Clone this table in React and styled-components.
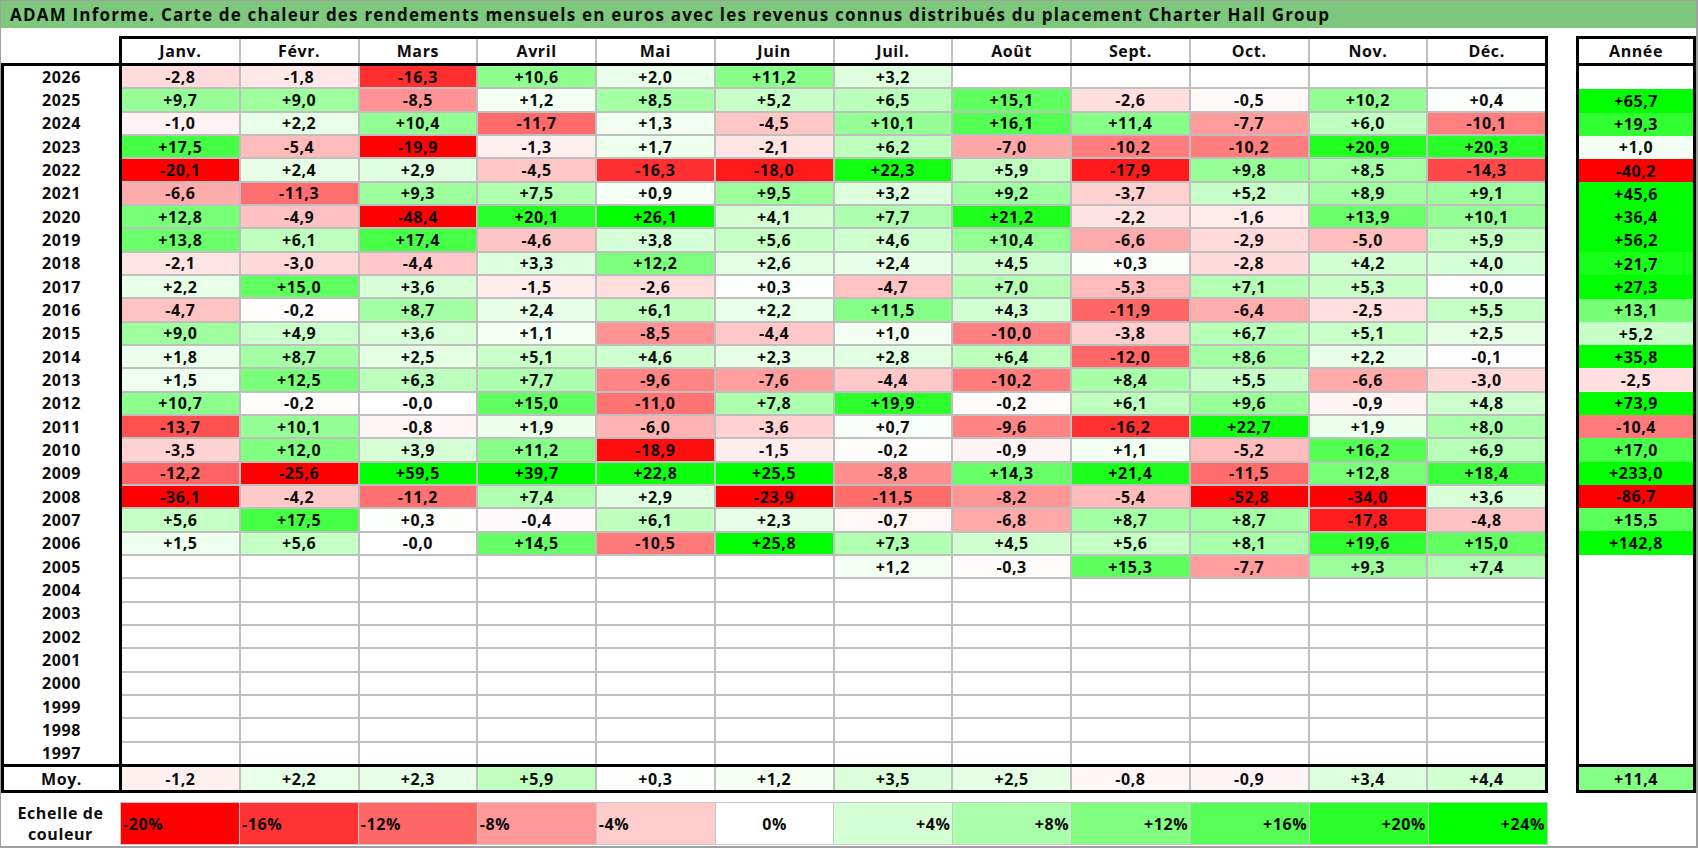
import React from 'react';
import styled, { createGlobalStyle } from 'styled-components';

const Global = createGlobalStyle`
  html, body { margin: 0; padding: 0; background: #fff; }
  body { font-family: "Open Sans", "Liberation Sans", sans-serif; color: #000; }
  * { box-sizing: border-box; }
`;

const MONTHS = ['Janv.', 'Févr.', 'Mars', 'Avril', 'Mai', 'Juin', 'Juil.', 'Août', 'Sept.', 'Oct.', 'Nov.', 'Déc.'];

const RAW = [
  ['2026', '-2,8 -1,8 -16,3 +10,6 +2,0 +11,2 +3,2 . . . . .', '.'],
  ['2025', '+9,7 +9,0 -8,5 +1,2 +8,5 +5,2 +6,5 +15,1 -2,6 -0,5 +10,2 +0,4', '+65,7'],
  ['2024', '-1,0 +2,2 +10,4 -11,7 +1,3 -4,5 +10,1 +16,1 +11,4 -7,7 +6,0 -10,1', '+19,3'],
  ['2023', '+17,5 -5,4 -19,9 -1,3 +1,7 -2,1 +6,2 -7,0 -10,2 -10,2 +20,9 +20,3', '+1,0'],
  ['2022', '-20,1 +2,4 +2,9 -4,5 -16,3 -18,0 +22,3 +5,9 -17,9 +9,8 +8,5 -14,3', '-40,2'],
  ['2021', '-6,6 -11,3 +9,3 +7,5 +0,9 +9,5 +3,2 +9,2 -3,7 +5,2 +8,9 +9,1', '+45,6'],
  ['2020', '+12,8 -4,9 -48,4 +20,1 +26,1 +4,1 +7,7 +21,2 -2,2 -1,6 +13,9 +10,1', '+36,4'],
  ['2019', '+13,8 +6,1 +17,4 -4,6 +3,8 +5,6 +4,6 +10,4 -6,6 -2,9 -5,0 +5,9', '+56,2'],
  ['2018', '-2,1 -3,0 -4,4 +3,3 +12,2 +2,6 +2,4 +4,5 +0,3 -2,8 +4,2 +4,0', '+21,7'],
  ['2017', '+2,2 +15,0 +3,6 -1,5 -2,6 +0,3 -4,7 +7,0 -5,3 +7,1 +5,3 +0,0', '+27,3'],
  ['2016', '-4,7 -0,2 +8,7 +2,4 +6,1 +2,2 +11,5 +4,3 -11,9 -6,4 -2,5 +5,5', '+13,1'],
  ['2015', '+9,0 +4,9 +3,6 +1,1 -8,5 -4,4 +1,0 -10,0 -3,8 +6,7 +5,1 +2,5', '+5,2'],
  ['2014', '+1,8 +8,7 +2,5 +5,1 +4,6 +2,3 +2,8 +6,4 -12,0 +8,6 +2,2 -0,1', '+35,8'],
  ['2013', '+1,5 +12,5 +6,3 +7,7 -9,6 -7,6 -4,4 -10,2 +8,4 +5,5 -6,6 -3,0', '-2,5'],
  ['2012', '+10,7 -0,2 -0,0 +15,0 -11,0 +7,8 +19,9 -0,2 +6,1 +9,6 -0,9 +4,8', '+73,9'],
  ['2011', '-13,7 +10,1 -0,8 +1,9 -6,0 -3,6 +0,7 -9,6 -16,2 +22,7 +1,9 +8,0', '-10,4'],
  ['2010', '-3,5 +12,0 +3,9 +11,2 -18,9 -1,5 -0,2 -0,9 +1,1 -5,2 +16,2 +6,9', '+17,0'],
  ['2009', '-12,2 -25,6 +59,5 +39,7 +22,8 +25,5 -8,8 +14,3 +21,4 -11,5 +12,8 +18,4', '+233,0'],
  ['2008', '-36,1 -4,2 -11,2 +7,4 +2,9 -23,9 -11,5 -8,2 -5,4 -52,8 -34,0 +3,6', '-86,7'],
  ['2007', '+5,6 +17,5 +0,3 -0,4 +6,1 +2,3 -0,7 -6,8 +8,7 +8,7 -17,8 -4,8', '+15,5'],
  ['2006', '+1,5 +5,6 -0,0 +14,5 -10,5 +25,8 +7,3 +4,5 +5,6 +8,1 +19,6 +15,0', '+142,8'],
  ['2005', '. . . . . . +1,2 -0,3 +15,3 -7,7 +9,3 +7,4', '.'],
  ['2004', '', '.'], ['2003', '', '.'], ['2002', '', '.'], ['2001', '', '.'],
  ['2000', '', '.'], ['1999', '', '.'], ['1998', '', '.'], ['1997', '', '.'],
];

const parseList = (s) => {
  const parts = s ? s.split(' ') : [];
  return Array.from({ length: 12 }, (_, i) => (parts[i] && parts[i] !== '.' ? parts[i] : null));
};

const ROWS = RAW.map(([year, vals, total]) => ({
  year,
  vals: parseList(vals),
  total: total === '.' ? null : total,
}));

const AVG = parseList('-1,2 +2,2 +2,3 +5,9 +0,3 +1,2 +3,5 +2,5 -0,8 -0,9 +3,4 +4,4');
const AVG_TOTAL = '+11,4';

const SCALE = [-20, -16, -12, -8, -4, 0, 4, 8, 12, 16, 20, 24];

const num = (s) => (s == null ? null : parseFloat(s.replace(',', '.')));

const heat = (s) => {
  const v = typeof s === 'number' ? s : num(s);
  if (v == null || Number.isNaN(v)) return '#ffffff';
  if (v < 0) {
    const t = Math.min(1, -v / 20);
    const g = Math.round(255 * (1 - t));
    return `rgb(255, ${g}, ${g})`;
  }
  const t = Math.min(1, v / 24);
  const r = Math.round(255 * (1 - t));
  return `rgb(${r}, 255, ${r})`;
};

const THICK = '3px solid #000';
const GRID_GREY = '#bfbfbf';

const Frame = styled.div`
  width: 1698px;
  height: 848px;
  border-top: 1px solid #a0a0a0;
  border-left: 1px solid #a0a0a0;
  border-right: 2px solid #a0a0a0;
  border-bottom: 2px solid #a0a0a0;
  display: flex;
  flex-direction: column;
  overflow: hidden;
  background: #fff;
`;

const TitleBar = styled.div`
  height: 27px;
  flex: none;
  background: #7ec87e;
  padding-left: 9px;
  font-weight: 700;
  font-size: 17px;
  letter-spacing: 1.2px;
  line-height: 27px;
  white-space: nowrap;
  color: #0d0d0d;
`;

const Main = styled.div`
  display: flex;
  gap: 28px;
  margin-top: 8px;
  flex: none;
`;

const LeftBlock = styled.div`
  width: 1547px;
  display: flex;
  flex-direction: column;
`;

const HeadRow = styled.div`
  display: flex;
  height: 30px;
  border-bottom: ${THICK};
`;

const HeadSpacer = styled.div`
  width: 118px;
  flex: none;
`;

const MonthHead = styled.div`
  flex: 1;
  display: grid;
  grid-template-columns: repeat(12, minmax(0, 1fr));
  gap: 2px;
  background: ${GRID_GREY};
  border: ${THICK};
  border-bottom: none;
`;

const Text = styled.div`
  font-weight: 700;
  font-size: 16px;
  line-height: 20px;
  letter-spacing: 0.6px;
  white-space: nowrap;
  color: #0d0d0d;
  min-height: 0;
`;

const HeadCell = styled(Text)`
  background: #fff;
  display: flex;
  align-items: center;
  justify-content: center;
`;

const BodyRow = styled.div`
  display: flex;
  height: 698px;
  border-left: ${THICK};
  border-right: ${THICK};
`;

const YearCol = styled.div`
  width: 118px;
  flex: none;
  border-right: ${THICK};
  display: grid;
  grid-template-rows: repeat(30, minmax(0, 1fr));
  row-gap: 2px;
`;

const YearCell = styled(Text)`
  display: flex;
  align-items: center;
  justify-content: center;
`;

const MonthGrid = styled.div`
  flex: 1;
  display: grid;
  grid-template-columns: repeat(12, minmax(0, 1fr));
  grid-template-rows: repeat(${(p) => p.$rows}, minmax(0, 1fr));
  gap: 2px;
  background: ${GRID_GREY};
`;

const Cell = styled(Text)`
  background: ${(p) => heat(p.$v)};
  display: flex;
  align-items: center;
  justify-content: center;
  overflow: hidden;
`;

const MoyRow = styled.div`
  display: flex;
  height: 29px;
  border: ${THICK};
`;

const MoyLabel = styled(YearCell)`
  width: 118px;
  flex: none;
  border-right: ${THICK};
`;

const AnneeBlock = styled.div`
  width: 120px;
  display: flex;
  flex-direction: column;
`;

const AnneeHead = styled(Text)`
  height: 30px;
  border: ${THICK};
  display: flex;
  align-items: center;
  justify-content: center;
`;

const AnneeBody = styled.div`
  height: 698px;
  border-left: ${THICK};
  border-right: ${THICK};
  display: grid;
  grid-template-rows: repeat(30, minmax(0, 1fr));
`;

const AnneeMoy = styled.div`
  height: 29px;
  border: ${THICK};
  display: grid;
`;

const ScaleRow = styled.div`
  display: flex;
  height: 43px;
  margin-top: 9px;
  flex: none;
`;

const ScaleLabel = styled(Text)`
  width: 119px;
  flex: none;
  display: flex;
  flex-direction: column;
  align-items: center;
  justify-content: center;
  line-height: 21px;
  padding-top: 1px;
`;

const ScaleGrid = styled.div`
  width: 1428px;
  display: grid;
  grid-template-columns: repeat(12, minmax(0, 1fr));
  gap: 1px;
  background: #c8c8c8;
  border: 1px solid #c8c8c8;
`;

const ScaleCell = styled(Text)`
  background: ${(p) => heat(p.$v)};
  display: flex;
  align-items: center;
  justify-content: ${(p) => (p.$v < 0 ? 'flex-start' : p.$v > 0 ? 'flex-end' : 'center')};
  padding: 0 2px;
`;

const scaleLabel = (v) => (v > 0 ? `+${v}%` : `${v}%`);

export default function App() {
  return (
    <>
      <Global />
      <Frame>
        <TitleBar>
          ADAM Informe. Carte de chaleur des rendements mensuels en euros avec les revenus connus distribués du placement Charter Hall Group
        </TitleBar>
        <Main>
          <LeftBlock>
            <HeadRow>
              <HeadSpacer />
              <MonthHead>
                {MONTHS.map((m) => (
                  <HeadCell key={m}>{m}</HeadCell>
                ))}
              </MonthHead>
            </HeadRow>
            <BodyRow>
              <YearCol>
                {ROWS.map((r) => (
                  <YearCell key={r.year}>{r.year}</YearCell>
                ))}
              </YearCol>
              <MonthGrid $rows={30}>
                {ROWS.map((r) =>
                  r.vals.map((v, i) => (
                    <Cell key={`${r.year}-${i}`} $v={v}>
                      {v}
                    </Cell>
                  ))
                )}
              </MonthGrid>
            </BodyRow>
            <MoyRow>
              <MoyLabel>Moy.</MoyLabel>
              <MonthGrid $rows={1}>
                {AVG.map((v, i) => (
                  <Cell key={`avg-${i}`} $v={v}>
                    {v}
                  </Cell>
                ))}
              </MonthGrid>
            </MoyRow>
          </LeftBlock>
          <AnneeBlock>
            <AnneeHead>Année</AnneeHead>
            <AnneeBody>
              {ROWS.map((r) => (
                <Cell key={`t-${r.year}`} $v={r.total}>
                  {r.total}
                </Cell>
              ))}
            </AnneeBody>
            <AnneeMoy>
              <Cell $v={AVG_TOTAL}>{AVG_TOTAL}</Cell>
            </AnneeMoy>
          </AnneeBlock>
        </Main>
        <ScaleRow>
          <ScaleLabel>
            <span>Echelle de</span>
            <span>couleur</span>
          </ScaleLabel>
          <ScaleGrid>
            {SCALE.map((v) => (
              <ScaleCell key={v} $v={v}>
                {scaleLabel(v)}
              </ScaleCell>
            ))}
          </ScaleGrid>
        </ScaleRow>
      </Frame>
    </>
  );
}
